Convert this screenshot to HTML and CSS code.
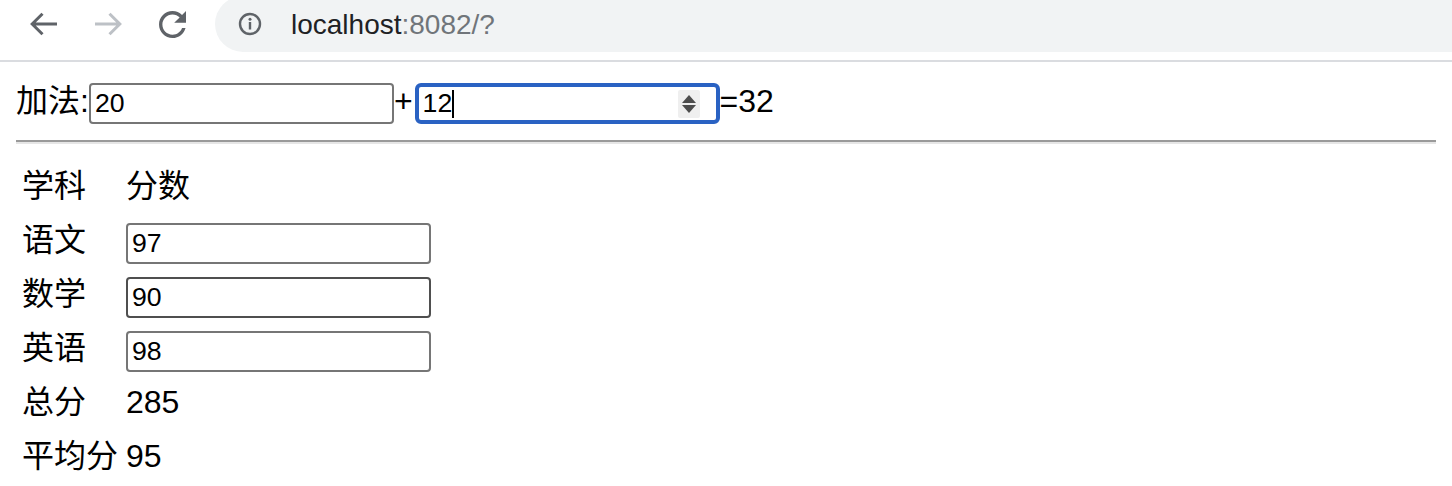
FILE: index.html
```html
<!DOCTYPE html>
<html lang="zh-CN">
<head>
<meta charset="utf-8">
<title>localhost:8082</title>
<link rel="stylesheet" href="styles.css">
</head>
<body>
<div class="window">
  <header class="toolbar">
    <nav class="nav">
      <span class="navbtn">
        <svg width="28" height="24" viewBox="0 0 28 24" fill="none" stroke="currentColor" stroke-width="3"><path d="M27 12H3M12.5 1.8L2.2 12l10.3 10.2"/></svg>
      </span>
      <span class="navbtn disabled">
        <svg width="28" height="24" viewBox="0 0 28 24" fill="none" stroke="currentColor" stroke-width="3"><path d="M1 12h24M15.5 1.8L25.8 12 15.5 22.2"/></svg>
      </span>
      <span class="navbtn">
        <svg width="27" height="27" viewBox="4 4 16 16" fill="currentColor"><path d="M17.65 6.35C16.2 4.9 14.21 4 12 4c-4.42 0-7.990 3.58-7.990 8s3.570 8 7.990 8c3.730 0 6.840-2.550 7.730-6h-2.080c-.820 2.330-3.040 4-5.650 4-3.310 0-6-2.690-6-6s2.690-6 6-6c1.660 0 3.140.690 4.220 1.780L13 11h7V4l-2.350 2.350z"/></svg>
      </span>
    </nav>
    <div class="omnibox">
      <span class="info">
        <svg width="24" height="24" viewBox="0 0 24 24"><circle cx="12" cy="12" r="10" fill="none" stroke="currentColor" stroke-width="2.4"/><circle cx="12" cy="7.3" r="1.5" fill="currentColor"/><rect x="10.8" y="10" width="2.4" height="7.5" fill="currentColor"/></svg>
      </span>
      <span class="url"><span class="host">localhost</span><span class="rest">:8082/?</span></span>
    </div>
  </header>
  <main class="page">
    <div class="calc">
      <span class="txt">加法:</span>
      <div class="field"><span class="val">20</span></div>
      <span class="txt">+</span>
      <div class="field focused">
        <span class="val">12</span><span class="caret"></span>
        <span class="spin">
          <svg width="22" height="28" viewBox="0 0 22 28"><path d="M11 5l7 8H4z M11 23l7-8H4z" fill="#4d4d4d"/></svg>
        </span>
      </div>
      <span class="txt">=32</span>
    </div>
    <hr class="rule">
    <table class="scores">
      <tbody>
        <tr><td>学科</td><td>分数</td></tr>
        <tr><td>语文</td><td><div class="field"><span class="val">97</span></div></td></tr>
        <tr><td>数学</td><td><div class="field hover"><span class="val">90</span></div></td></tr>
        <tr><td>英语</td><td><div class="field"><span class="val">98</span></div></td></tr>
        <tr><td>总分</td><td>285</td></tr>
        <tr><td>平均分</td><td>95</td></tr>
      </tbody>
    </table>
  </main>
</div>
</body>
</html>
```

FILE: styles.css
```css
html, body {
  margin: 0;
  padding: 0;
  background: #ffffff;
}

.window {
  width: 1452px;
  height: 486px;
  overflow: hidden;
  font-family: "Liberation Sans", "Noto Sans CJK SC", sans-serif;
  color: #000000;
}

/* ---------- browser toolbar ---------- */
.toolbar {
  display: flex;
  align-items: flex-start;
  height: 60px;
  border-bottom: 2px solid #dadce0;
  overflow: hidden;
  background: #ffffff;
}

.nav {
  display: flex;
  padding-left: 12px;
  margin-right: 11px;
}

.navbtn {
  width: 64px;
  height: 48px;
  display: flex;
  align-items: center;
  justify-content: center;
  color: #5f6368;
}

.navbtn.disabled {
  color: #bdc1c6;
}

.omnibox {
  flex: 1;
  display: flex;
  align-items: center;
  height: 56px;
  margin-top: -4px;
  padding-left: 23px;
  background: #f1f3f4;
  border-radius: 28px 0 0 28px;
}

.info {
  display: flex;
  width: 24px;
  height: 24px;
  margin-right: 29px;
  color: #5f6368;
}

.url {
  font-size: 28px;
  line-height: 32px;
  padding-top: 2px;
  color: #202124;
  white-space: nowrap;
}

.url .rest {
  color: #70757a;
}

/* ---------- page ---------- */
.page {
  padding: 16px;
  font-size: 32px;
}

.calc {
  display: flex;
  align-items: baseline;
  line-height: 46px;
  white-space: nowrap;
}

.field {
  box-sizing: border-box;
  display: flex;
  align-items: center;
  width: 305px;
  height: 41px;
  padding: 0 4px;
  border: 2px solid #767676;
  border-radius: 4px;
  background: #ffffff;
  font-size: 26.67px;
  line-height: 37px;
}

.field.hover {
  border-color: #4f4f4f;
}

.field.focused {
  margin-left: 2px;
  border: 4px solid #2a62c3;
  border-radius: 6px;
  line-height: 33px;
}

.caret {
  width: 2px;
  height: 28px;
  background: #000000;
  align-self: center;
}

.spin {
  display: flex;
  margin-left: auto;
  margin-right: 12px;
  background: #efefef;
  border-radius: 2px;
  align-self: center;
}

.rule {
  height: 0;
  margin: 16px 0;
  border: 0;
  border-top: 2px solid #9a9a9a;
  border-bottom: 2px solid #e6e6e6;
}

.scores {
  border-collapse: separate;
  border-spacing: 4px;
}

.scores tr {
  height: 50px;
}

.scores td {
  padding: 2px;
  vertical-align: top;
  line-height: 40px;
  white-space: nowrap;
}

.scores .field {
  margin-top: 3px;
}
```
